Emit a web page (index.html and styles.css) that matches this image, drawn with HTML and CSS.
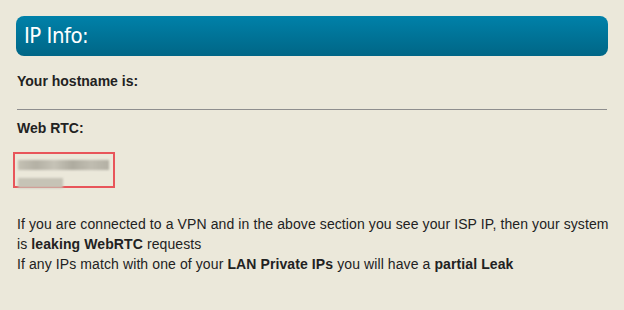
FILE: index.html
```html
<!DOCTYPE html>
<html>
<head>
  <title>IP Info</title>
  <link rel="stylesheet" href="styles.css">
</head>
<body>
  <div class="panel">
    <h2 class="panel-title">IP Info:</h2>

    <div class="info-row">
      <div class="info-label">Your hostname is:</div>
    </div>

    <hr class="divider">

    <div class="info-row">
      <div class="info-label">Web RTC:</div>
      <div class="rtc-box">
        <div class="blur-line long"></div>
        <div class="blur-line short"></div>
      </div>
    </div>

    <p class="note">
      If you are connected to a VPN and in the above section you see your ISP IP, then your system
      is <b>leaking WebRTC</b> requests<br>
      If any IPs match with one of your <b>LAN Private IPs</b> you will have a <b>partial Leak</b>
    </p>
  </div>
</body>
</html>
```

FILE: styles.css
```css
* {
  margin: 0;
  padding: 0;
  box-sizing: border-box;
}

body {
  background: #ebe8da;
  color: #222;
  font-family: 'Liberation Sans', Arial, sans-serif;
  font-size: 14px;
}

.panel {
  width: 624px;
  height: 310px;
  padding: 16px 16px 0 16px;
}

.panel-title {
  height: 40px;
  padding-left: 8px;
  border-radius: 8px;
  background: linear-gradient(180deg, #0081a9 0%, #006686 100%);
  color: #fff;
  font-family: 'DejaVu Sans Condensed', 'DejaVu Sans', sans-serif;
  font-weight: normal;
  font-size: 22px;
  letter-spacing: -0.5px;
  line-height: 40px;
}

.info-row {
  padding-left: 1px;
}

.info-label {
  font-weight: bold;
  font-size: 14px;
  line-height: 20px;
}

.panel-title + .info-row {
  margin-top: 15px;
}

.divider {
  border: none;
  border-top: 1px solid #8e8e8e;
  margin: 18px 1px 0 1px;
}

.divider + .info-row {
  margin-top: 8px;
}

.rtc-box {
  width: 102px;
  height: 36px;
  margin-top: 14px;
  margin-left: -4px;
  border: 2px solid #e8555a;
  padding: 6px 0 0 3px;
}

.blur-line {
  height: 10px;
  background: linear-gradient(90deg, #c4c1b4 0%, #b4b1a5 20%, #c6c3b7 40%, #aeab9f 60%, #c0bdb1 80%, #b3b0a4 100%);
  filter: blur(1px);
}

.blur-line.long {
  width: 91px;
}

.blur-line.short {
  width: 45px;
  margin-top: 8px;
  background: #c6c3b6;
}

.note {
  margin-top: 26px;
  margin-right: -10px;
  padding-left: 1px;
  line-height: 20px;
  letter-spacing: 0.1px;
}
```
